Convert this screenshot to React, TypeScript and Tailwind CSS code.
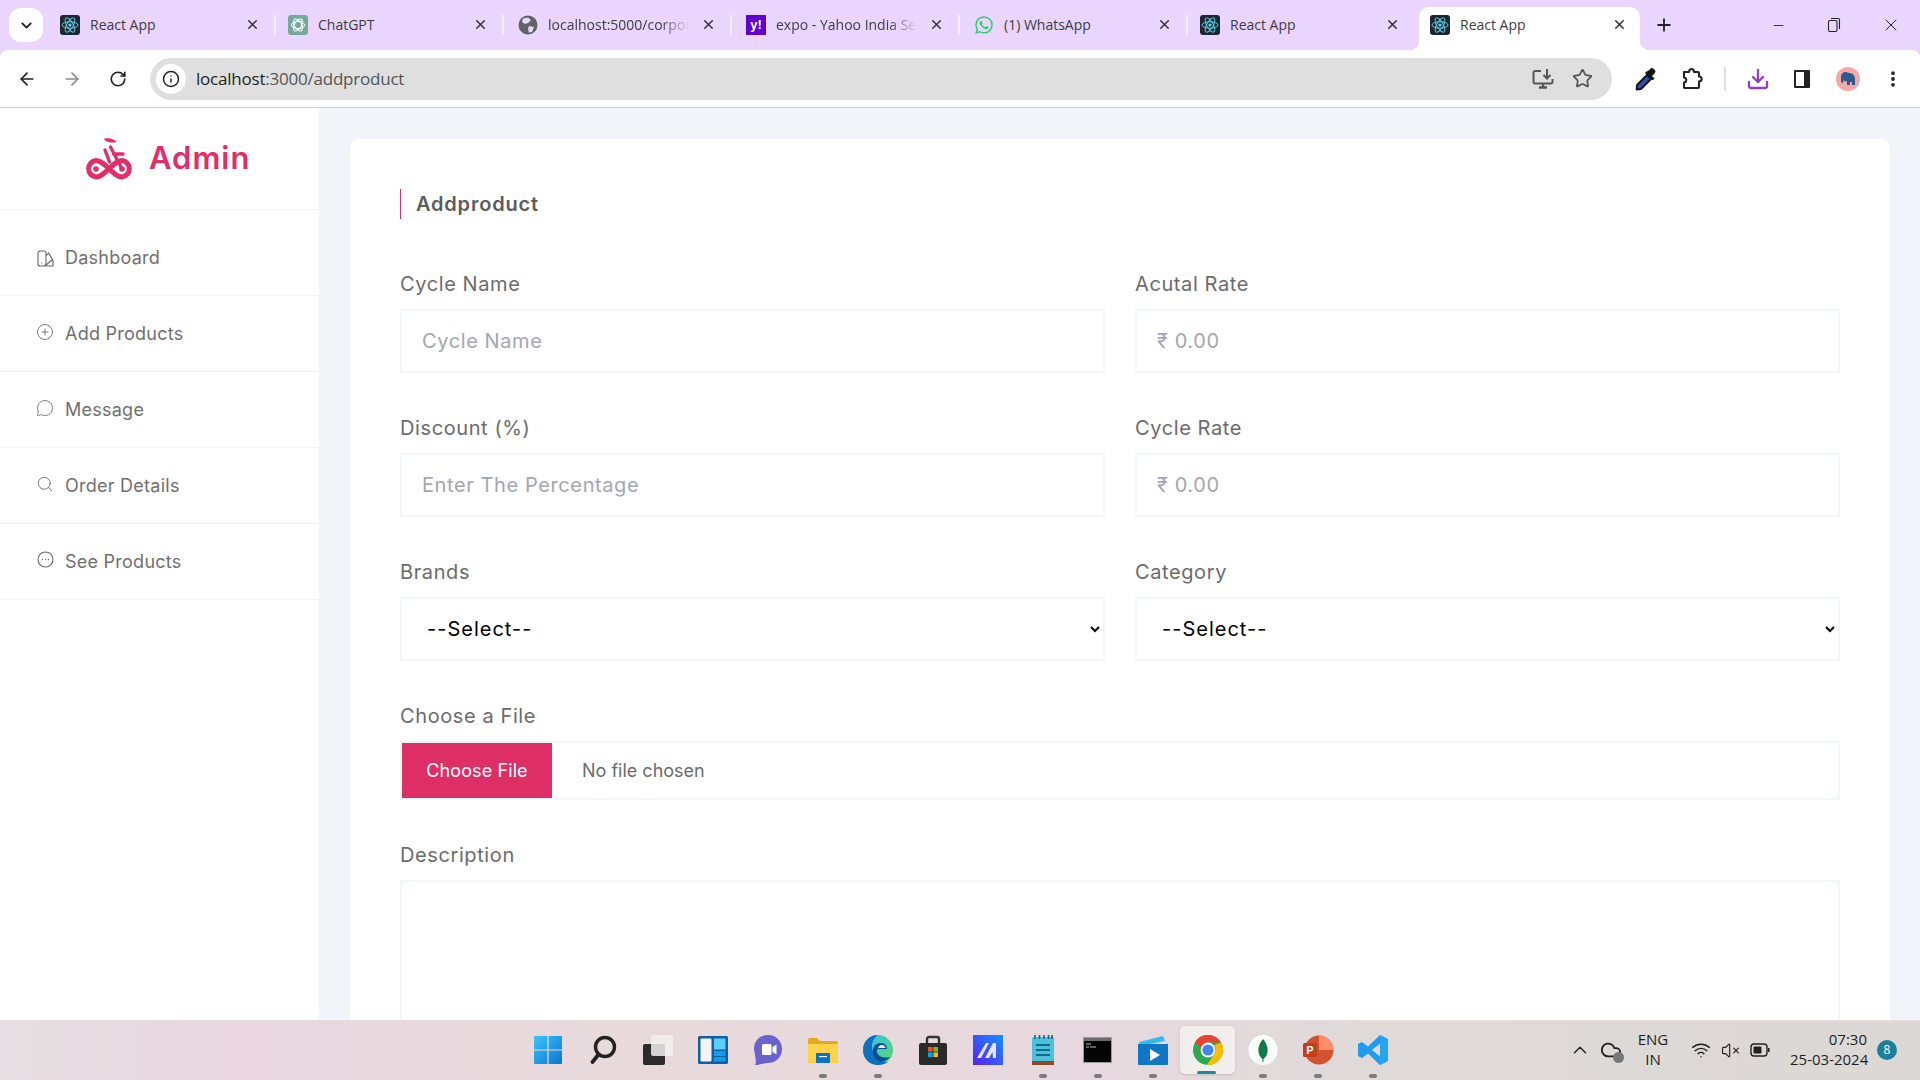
import React from "react";
import { ArrowLeft, ArrowRight, RotateCw, Info, Star, Plus, X, Minus, ChevronDown, ChevronUp, EllipsisVertical, Download, CirclePlus, MessageCircle, Search, Wifi, VolumeX, Cloud } from "lucide-react";
import { IoLogoWhatsapp } from "react-icons/io5";

const ReactIcon = () => (
  <svg width="20" height="20" viewBox="0 0 20 20" className="shrink-0">
    <rect width="20" height="20" rx="3" fill="#20262e" />
    <g fill="none" stroke="#61dafb" strokeWidth="0.9">
      <ellipse cx="10" cy="10" rx="8" ry="3.2" />
      <ellipse cx="10" cy="10" rx="8" ry="3.2" transform="rotate(60 10 10)" />
      <ellipse cx="10" cy="10" rx="8" ry="3.2" transform="rotate(120 10 10)" />
    </g>
    <circle cx="10" cy="10" r="1.6" fill="#61dafb" />
  </svg>
);
const GptIcon = () => (
  <svg width="20" height="20" viewBox="0 0 20 20" className="shrink-0">
    <rect width="20" height="20" rx="3" fill="#74aa9c" />
    <g fill="none" stroke="#fff" strokeWidth="1">
      <ellipse cx="10" cy="10" rx="6.6" ry="3.6" />
      <ellipse cx="10" cy="10" rx="6.6" ry="3.6" transform="rotate(60 10 10)" />
      <ellipse cx="10" cy="10" rx="6.6" ry="3.6" transform="rotate(120 10 10)" />
    </g>
  </svg>
);
const GlobeIcon = () => (
  <svg width="20" height="20" viewBox="0 0 20 20" className="shrink-0 ml-[2px]">
    <circle cx="10" cy="10" r="9.5" fill="#5f6368" />
    <path d="M5 3.5 L10 2.5 L13 5 L10 8 L7 9 L4 7 Z M11 11 L16 12 L14 17 L11 17.5 L10 14 Z" fill="#e9d5fe" />
  </svg>
);
const YahooIcon = () => (
  <span className="shrink-0 w-5 h-5 ml-[2px] bg-[#6001d2] text-white font-bold text-[13px] leading-5 text-center font-['Liberation_Sans',sans-serif]">y!</span>
);

const tabs = [
  { icon: <ReactIcon />, title: "React App" },
  { icon: <GptIcon />, title: "ChatGPT" },
  { icon: <GlobeIcon />, title: "localhost:5000/corporate", fade: true },
  { icon: <YahooIcon />, title: "expo - Yahoo India Search", fade: true },
  { icon: <IoLogoWhatsapp size={20} color="#25d366" className="shrink-0 ml-[2px]" />, title: "(1) WhatsApp" },
  { icon: <ReactIcon />, title: "React App" },
  { icon: <ReactIcon />, title: "React App", active: true },
];

function Tab({ icon, title, fade, active, last }: { icon: React.ReactNode; title: string; fade?: boolean; active?: boolean; last?: boolean }) {
  return (
    <div className={`relative h-[43px] flex items-center pb-[8px] ${active ? "bg-white rounded-t-[10px] w-[221px] ml-[3px] pl-[11px] pr-[13px]" : "w-[228px] pl-[12px] pr-[16px]"}`}>
      {active && (
        <>
          <span className="absolute -left-[10px] bottom-0 w-[10px] h-[10px] bg-[radial-gradient(circle_at_0_0,#e9d5fe_10px,#ffffff_10.5px)]" />
          <span className="absolute -right-[10px] bottom-0 w-[10px] h-[10px] bg-[radial-gradient(circle_at_100%_0,#e9d5fe_10px,#ffffff_10.5px)]" />
        </>
      )}
      {icon}
      <span className={`ml-[10px] flex-1 min-w-0 whitespace-nowrap overflow-hidden text-[14px] text-[#3d3d3d] ${fade ? "mr-[6px] [mask-image:linear-gradient(to_right,black_80%,transparent)]" : ""}`}>{title}</span>
      <X size={15} strokeWidth={2.4} className="ml-[6px] shrink-0 text-[#333]" />
      {!active && !last && <span className="absolute right-0 top-[8px] w-[2px] h-[20px] bg-[#f6effe]" />}
    </div>
  );
}

function TabStrip() {
  return (
    <div className="h-[50px] flex items-end shrink-0 relative">
      <div className="w-[48px] h-[50px] flex items-start pl-[9px] pt-[8px]">
        <div className="w-[34px] h-[34px] rounded-[12px] bg-white flex items-center justify-center">
          <ChevronDown size={17} strokeWidth={2.6} className="text-[#222]" />
        </div>
      </div>
      {tabs.map((t, i) => (
        <Tab key={i} icon={t.icon} title={t.title} fade={t.fade} active={t.active} last={i === 5} />
      ))}
      <div className="w-[48px] h-[43px] flex items-center justify-center pb-[7px]">
        <Plus size={20} strokeWidth={2.2} className="text-[#222]" />
      </div>
      <div className="ml-auto h-[50px] flex items-center text-[#222]">
        <div className="w-[56px] flex justify-center"><Minus size={15} strokeWidth={1.4} /></div>
        <div className="w-[56px] flex justify-center">
          <svg width="14" height="16" viewBox="0 0 14 16" fill="none" stroke="currentColor" strokeWidth="1.1"><rect x="1.5" y="3.5" width="8.5" height="11" rx="1.5" /><path d="M4 1.5 H11 a1.5 1.5 0 0 1 1.5 1.5 V12" /></svg>
        </div>
        <div className="w-[58px] flex justify-center"><X size={20} strokeWidth={1.2} /></div>
      </div>
    </div>
  );
}

function Toolbar() {
  return (
    <div className="h-[58px] shrink-0 bg-white rounded-t-[8px] border-b border-[#cfcfcf] flex items-center relative">
      <div className="w-[150px] flex items-center shrink-0 text-[#222]">
        <div className="w-[54px] flex justify-center"><ArrowLeft size={20} strokeWidth={2} /></div>
        <div className="w-[36px] flex justify-center"><ArrowRight size={20} strokeWidth={2} className="text-[#8a8a8a]" /></div>
        <div className="w-[56px] flex justify-center"><RotateCw size={18} strokeWidth={2.2} /></div>
      </div>
      <div className="w-[1462px] h-[42px] rounded-full bg-[#dfdfdf] flex items-center pl-[6px] shrink-0">
        <div className="w-[30px] h-[30px] rounded-full bg-white flex items-center justify-center shrink-0">
          <Info size={18} strokeWidth={2} className="text-[#222]" />
        </div>
        <span className="ml-[10px] text-[17px] tracking-[-0.22px] text-[#555]"><span className="text-[#1f1f1f]">localhost</span>:3000/addproduct</span>
        <div className="ml-auto flex items-center text-[#555] pr-[19px] gap-[18px]">
          <svg width="22" height="22" viewBox="0 0 22 22" fill="none" stroke="#555" strokeWidth="2"><path d="M9 3 H3 a1.5 1.5 0 0 0 -1.5 1.5 V14 a1.5 1.5 0 0 0 1.5 1.5 H19 a1.5 1.5 0 0 0 1.5 -1.5 V11" /><path d="M15 1 V10 M11.5 7 L15 10.5 L18.5 7" /><path d="M7 19.5 H15 M11 16 V19.5" strokeWidth="2.4" /></svg>
          <Star size={21} strokeWidth={2} />
        </div>
      </div>
      <div className="flex items-center flex-1 text-[#222]">
        <div className="w-[58px] flex justify-center pl-[8px]">
          <svg width="22" height="24" viewBox="0 0 22 24"><path d="M13 8 L17 12 L7 22 L2.5 22.5 L3 18 Z" fill="#2b4fb8" stroke="#111" strokeWidth="1.8" strokeLinejoin="round" /><path d="M11.5 6 L18.5 13 L20 11.5 L17.5 9 L20 6.5 A2.8 2.8 0 0 0 16 2.5 L13.5 5 L13 4.5 Z" fill="#111" stroke="#111" /></svg>
        </div>
        <div className="w-[44px] flex justify-center">
          <svg width="22" height="24" viewBox="0 0 22 24" fill="none" stroke="#222" strokeWidth="2.1" strokeLinejoin="round"><path d="M3 5 H8 C8 1 13 1 13 5 H17 a1 1 0 0 1 1 1 V9.5 C21.5 9.5 21.5 14.5 18 14.5 V20 a1 1 0 0 1 -1 1 H4 a1 1 0 0 1 -1 -1 V15.5 C6 15.5 6 10.5 3 10.5 Z" /></svg>
        </div>
        <div className="w-[2px] h-[24px] bg-[#e6d8f8] ml-[10px]" />
        <div className="w-[44px] flex justify-center ml-[10px]"><Download size={24} strokeWidth={2.3} className="text-[#8a3fd1]" /></div>
        <div className="w-[44px] flex justify-center">
          <svg width="18" height="20" viewBox="0 0 18 20"><path fillRule="evenodd" d="M2 1 H16 a1 1 0 0 1 1 1 V18 a1 1 0 0 1 -1 1 H2 a1 1 0 0 1 -1 -1 V2 a1 1 0 0 1 1 -1 Z M3 3 V17 H11 V3 Z" fill="#222" /></svg>
        </div>
        <div className="w-[24px] h-[24px] rounded-full bg-[#f5a8a8] flex items-center justify-center ml-[12px]">
          <svg width="16" height="16" viewBox="0 0 16 16"><path d="M1 6 C1 3 3 1 6 1 C7 1 8 2 9 2 C12 2 15 4 15 8 V14 H12 V11 H10 V14 H7 V10 C5 11 4 10 4 8 L3 12 L1 11 Z" fill="#2b5b8c" /></svg>
        </div>
        <div className="ml-[23px]"><EllipsisVertical size={20} strokeWidth={2.6} /></div>
      </div>
    </div>
  );
}

const BikeLogo = () => (
  <svg width="48" height="43" viewBox="0 0 48 43" fill="none" stroke="#e12d68" className="shrink-0">
    <path d="M11 23.5 C20 23.5 28 40 37 40 A8.3 8.3 0 0 0 37 23.5 C28 23.5 20 40 11 40 A8.3 8.3 0 0 1 11 23.5 Z" strokeWidth="5" />
    <circle cx="11" cy="32" r="2.8" fill="#e12d68" stroke="none" />
    <circle cx="37" cy="32" r="2.8" fill="#e12d68" stroke="none" />
    <path d="M20 13 L24.5 25 M25.5 10 L37 32 M28.5 17 H38" strokeWidth="3.4" strokeLinecap="round" />
    <path d="M19 1.5 C23 0.5 30 2 31.5 5 C27 6.5 20 5 19 1.5 Z" fill="#e12d68" stroke="none" />
  </svg>
);

const navCls = "mb-[4px] text-[#666]";
const navItems = [
  {
    label: "Dashboard",
    icon: (
      <svg width="17" height="17" viewBox="0 0 17 17" fill="none" stroke="#666" strokeWidth="1.1" className="mb-[-2px]">
        <path d="M3 1 H7 a2 2 0 0 1 2 2 V13.5 a2.5 2.5 0 0 1 -2.5 2.5 H3 a2 2 0 0 1 -2 -2 V3 a2 2 0 0 1 2 -2 Z" />
        <path d="M9 6 L11.5 3 L15.5 9.5 L8 16 M9 16 H16 V10.5 H14.5" />
        <circle cx="4.5" cy="13" r="0.6" fill="#666" stroke="none" />
      </svg>
    ),
  },
  { label: "Add Products", icon: <CirclePlus size={18} strokeWidth={1.15} className={navCls} /> },
  { label: "Message", icon: <MessageCircle size={18} strokeWidth={1.15} className={navCls} /> },
  { label: "Order Details", icon: <Search size={18} strokeWidth={1.15} className={navCls} /> },
  {
    label: "See Products",
    icon: (
      <svg width="17" height="17" viewBox="0 0 17 17" fill="none" stroke="#666" strokeWidth="1.1" className="mb-[4px]">
        <circle cx="8.5" cy="8.5" r="7.5" />
        <circle cx="5.5" cy="8.5" r="0.7" fill="#666" stroke="none" />
        <circle cx="8.5" cy="8.5" r="0.7" fill="#666" stroke="none" />
        <circle cx="11.5" cy="8.5" r="0.7" fill="#666" stroke="none" />
      </svg>
    ),
  },
];

function Sidebar() {
  return (
    <aside className="w-[320px] shrink-0 bg-white border-r border-[#f1f5f9]">
      <div className="h-[102px] border-b border-[#f1f4f7] flex items-center pl-[85px] pb-[1px]">
        <BikeLogo />
        <span className="ml-[16px] text-[31px] font-semibold tracking-[1px] text-[#e12d68]">Admin</span>
      </div>
      {navItems.map((n, i) => (
        <div key={n.label} className={`border-b border-[#f1f4f7] flex items-center pl-[36px] text-[#6f6f6f] ${i === 0 ? "h-[86px] pt-[9px]" : "h-[76px]"}`}>
          <span className="w-[18px] flex justify-center">{n.icon}</span>
          <span className="ml-[11px] text-[18px] tracking-[0.25px]">{n.label}</span>
        </div>
      ))}
    </aside>
  );
}

const inputCls = "w-full h-[64px] border-2 border-[#f2f5f9] bg-white px-[20px] text-[20px] tracking-[0.6px] outline-none placeholder:text-[#a4a6b0]";
const labelCls = "block h-[30px] leading-[30px] mb-[10px] text-[20px] tracking-[0.6px] text-[#6b6b6b]";

function Field({ label, placeholder }: { label: string; placeholder: string }) {
  return (
    <div>
      <label className={labelCls}>{label}</label>
      <input type="text" placeholder={placeholder} className={inputCls} />
    </div>
  );
}
function SelectField({ label }: { label: string }) {
  return (
    <div>
      <label className={labelCls}>{label}</label>
      <select className="w-full h-[64px] border-2 border-[#f2f5f9] bg-white pl-[21px] pr-[12px] text-[20px] tracking-[1px] text-black outline-none">
        <option>--Select--</option>
      </select>
    </div>
  );
}

function Form() {
  return (
    <main className="flex-1 min-w-0 bg-[#f1f5fa] pl-[30px] pr-[30px] pt-[31px] overflow-hidden">
      <div className="bg-white rounded-t-[10px] pt-[50px] pl-[50px] pr-[50px] h-[1000px]">
        <h2 className="h-[30px] border-l border-[#e12d68] pl-[15px] mb-[50px] text-[20px] leading-[30px] font-semibold tracking-[0.8px] text-[#5c5c5c]">Addproduct</h2>
        <div className="grid grid-cols-2 gap-x-[30px] gap-y-[40px]">
          <Field label="Cycle Name" placeholder="Cycle Name" />
          <Field label="Acutal Rate" placeholder="₹ 0.00" />
          <Field label="Discount (%)" placeholder="Enter The Percentage" />
          <Field label="Cycle Rate" placeholder="₹ 0.00" />
          <SelectField label="Brands" />
          <SelectField label="Category" />
          <div className="col-span-2">
            <label className={labelCls}>Choose a File</label>
            <input type="file" className="block w-full h-[59px] border-2 border-[#f2f5f9] text-[18px] tracking-[0px] leading-[55px] text-[#6b6b6b] file:h-[55px] file:w-[150px] file:mr-[30px] file:border-0 file:bg-[#dd2e66] file:text-white file:text-[18px] file:tracking-[0.1px]" />
          </div>
          <div className="col-span-2">
            <label className={labelCls}>Description</label>
            <textarea className="block w-full h-[300px] border-2 border-[#f2f5f9] outline-none resize-none" />
          </div>
        </div>
      </div>
    </main>
  );
}

const W = ({ children }: { children: React.ReactNode }) => <svg width="32" height="32" viewBox="0 0 32 32">{children}</svg>;

const taskIcons: { el: React.ReactNode; dot?: boolean; active?: boolean }[] = [
  { el: <W><defs><linearGradient id="w1" x1="0" y1="0" x2="1" y2="1"><stop offset="0" stopColor="#3cc4fa" /><stop offset="1" stopColor="#0a74d0" /></linearGradient></defs><path d="M2 3 a1 1 0 0 1 1-1 H15.4 V15.4 H2 Z M16.6 2 H29 a1 1 0 0 1 1 1 V15.4 H16.6 Z M2 16.6 H15.4 V30 H3 a1 1 0 0 1 -1-1 Z M16.6 16.6 H30 V29 a1 1 0 0 1 -1 1 H16.6 Z" fill="url(#w1)" /></W> },
  { el: <W><circle cx="18" cy="13" r="9.5" fill="none" stroke="#222" strokeWidth="3.4" /><path d="M11.5 20.5 L5.5 28" stroke="#222" strokeWidth="3.8" strokeLinecap="round" /></W> },
  { el: <W><rect x="1" y="10" width="22" height="21" rx="2" fill="#2b2b2b" /><rect x="9" y="1" width="22" height="21" rx="2" fill="#f3eeee" fillOpacity="0.85" /></W> },
  { el: <W><rect x="1" y="2" width="30" height="28" rx="1.5" fill="#0f5ea8" /><rect x="3.5" y="4.5" width="11" height="23" rx="1" fill="#f4f4f4" /><rect x="17" y="4.5" width="11.5" height="11" fill="#5cd0fb" /><rect x="17" y="17" width="11.5" height="5" fill="#169be8" /><rect x="17" y="23" width="11.5" height="4.5" fill="#169be8" /></W> },
  { el: <W><path d="M16 1 C24 1 30 7 30 15 C30 23 24 29 16 29 C12 29 7 31 3 31 C5 28 3 22 2 15 C2 7 8 1 16 1 Z" fill="#6a63cf" /><rect x="10" y="10" width="9.5" height="11" rx="1.5" fill="#fff" /><path d="M20.5 13 L24.5 10.5 V20.5 L20.5 18 Z" fill="#fff" /></W> },
  { dot: true, el: <W><path d="M1 6 a2 2 0 0 1 2-2 H10 L13 7 H29 a2 2 0 0 1 2 2 V27 a2 2 0 0 1 -2 2 H3 a2 2 0 0 1 -2-2 Z" fill="#e5a81d" /><path d="M1 10 H31 V27 a2 2 0 0 1 -2 2 H3 a2 2 0 0 1 -2-2 Z" fill="#fdd34c" /><path d="M9 20 a1 1 0 0 1 1-1 H22 a1 1 0 0 1 1 1 V29 H9 Z" fill="#0a74c4" /><rect x="12" y="22" width="8" height="1.2" fill="#e8f4ff" /></W> },
  { dot: true, el: <W><defs><linearGradient id="e1" x1="0" y1="0" x2="1" y2="1"><stop offset="0" stopColor="#37c3e8" /><stop offset="1" stopColor="#5bd66b" /></linearGradient></defs><circle cx="16" cy="16" r="15" fill="url(#e1)" /><path d="M1 16 C1 7 8 1 16 1 C13 3 10 7 10 12 C10 20 16 29 26 28 C23 30 20 31 16 31 C8 31 1 25 1 16 Z" fill="#0f6fc0" /><path d="M11 17 C11 11 15 9 19 9 C23 9 25 12 25 15 H17 C15 15 14 17 15.5 19.5 C17.5 23 22 24.5 28 23 C25 27 21 28.5 17.5 27.5 C13.5 26 11 22 11 17 Z" fill="#0b4f96" /><path d="M16 15 C16 12 18 11 20 11 C22 11 23.5 12.5 23.5 14 H18 C16.8 14 16 14.5 16 15 Z" fill="#e9eef2" /></W> },
  { el: <W><path d="M10 9 V5 a2 2 0 0 1 2-2 H20 a2 2 0 0 1 2 2 V9" fill="none" stroke="#333" strokeWidth="2.4" /><rect x="2" y="9" width="28" height="22" rx="2" fill="#2a2a2a" /><rect x="11" y="13" width="4.6" height="4.6" fill="#f25022" /><rect x="16.4" y="13" width="4.6" height="4.6" fill="#7fba00" /><rect x="11" y="18.4" width="4.6" height="4.6" fill="#00a4ef" /><rect x="16.4" y="18.4" width="4.6" height="4.6" fill="#ffb900" /></W> },
  { el: <W><defs><linearGradient id="m1" x1="0" y1="1" x2="1" y2="0"><stop offset="0" stopColor="#5a22f0" /><stop offset="1" stopColor="#1390ff" /></linearGradient></defs><rect x="1" y="1" width="30" height="30" fill="url(#m1)" /><path d="M5 24 L14 9 H17 L9 24 Z M13 24 L21 9 H24 L24 24 H21 L20.5 18 L17 24 Z" fill="#e9e4ff" /></W> },
  { dot: true, el: <W><rect x="5" y="3" width="22" height="26" rx="1.5" fill="#4cc0dc" /><rect x="5" y="27" width="22" height="4" fill="#8a4a2a" /><path d="M8 1 v4 M12.5 1 v4 M17 1 v4 M21.5 1 v4 M25 1 v4" stroke="#116a86" strokeWidth="1.6" /><path d="M9 11 H23 M9 16 H23 M9 21 H23" stroke="#0f6c8c" strokeWidth="2" /></W> },
  { dot: true, el: <W><rect x="1" y="3" width="29" height="26" fill="#9a9a9a" /><rect x="2" y="4" width="27" height="24" fill="#050505" /><rect x="2" y="4" width="27" height="3" fill="#6c6c6c" /><path d="M4 10 H9 M4 13 H7 M8 13 H14" stroke="#bbb" strokeWidth="1" /></W> },
  { dot: true, el: <W><path d="M2 8 L26 2 L28 7 L3 12 Z" fill="#39b8ee" /><path d="M1 10 H31 V30 a1 1 0 0 1 -1 1 H2 a1 1 0 0 1 -1 -1 Z" fill="#0f76c5" /><path d="M13 15 L23 21 L13 27 Z" fill="#fff" /></W> },
  { active: true, el: <W><circle cx="16" cy="16" r="15" fill="#2da94f" /><path d="M16 1 A15 15 0 0 1 29 8.5 H16 A7.5 7.5 0 0 0 8.8 13.8 L3 8 A15 15 0 0 1 16 1 Z" fill="#e94335" /><path d="M29 8.5 A15 15 0 0 1 15 31 L22.3 19.7 A7.5 7.5 0 0 0 22 11 Z" fill="#fbbc04" /><circle cx="16" cy="16" r="7.4" fill="#fff" /><circle cx="16" cy="16" r="5.6" fill="#4285f4" /></W> },
  { dot: true, el: <W><ellipse cx="16" cy="16" rx="14.5" ry="15" fill="#fbfbfb" /><path d="M16 5 C20 10 21 14 20.5 18 C20 22 17.5 24 16.5 25 L16.5 28 H15.5 L15.5 25 C14.5 24 12 22 11.5 18 C11 14 12 10 16 5 Z" fill="#0d7a4b" /></W> },
  { dot: true, el: <W><circle cx="17" cy="16" r="14.5" fill="#d35230" /><path d="M17 1.5 A14.5 14.5 0 0 1 31.5 16 H17 Z" fill="#ff8f6b" /><rect x="1" y="9" width="14" height="14" rx="1.5" fill="#c43e1c" /><text x="8" y="20" textAnchor="middle" fontSize="11" fontWeight="700" fill="#fff" fontFamily="Liberation Sans, sans-serif">P</text></W> },
  { dot: true, el: <W><path fillRule="evenodd" d="M23 1 L31 5 V27 L23 31 L11 19.5 L5 24 L1 22 V10 L5 8 L11 12.5 Z M23 9.5 L15 16 L23 22.5 Z" fill="#1f9cf0" /><path d="M23 1 L31 5 V27 L23 31 Z" fill="#2aa8f2" fillOpacity="0.7" /></W> },
];

function Taskbar() {
  return (
    <div className="h-[60px] shrink-0 border-t border-[#e8e0e0] pb-[1px] bg-[linear-gradient(90deg,#e6dfe2_0%,#e9d6df_12%,#e8dadb_35%,#e7d8df_55%,#dfdad8_72%,#dcd8d5_100%)] flex items-center relative">
      <div className="flex items-center pl-[520px]">
        {taskIcons.map((t, i) => (
          <div key={i} className={`relative w-[55px] h-[48px] flex items-center justify-center ${t.active ? "bg-[#f2eeec] rounded-[5px] shadow-sm" : ""}`}>
            {t.el}
            {t.dot && <span className="absolute bottom-[-4px] left-[24px] w-[8px] h-[4px] rounded-full bg-[#7d7a7a]" />}
            {t.active && <span className="absolute bottom-[0px] left-[17px] w-[19px] h-[3px] rounded-full bg-[#1f8a9e]" />}
          </div>
        ))}
      </div>
      <div className="flex items-center text-[#1f1f1f] ml-[169px] font-['Open_Sans',sans-serif]">
        <ChevronUp size={22} strokeWidth={1.5} />
        <div className="relative ml-[9px]">
          <Cloud size={22} strokeWidth={2} />
          <span className="absolute -right-[2px] -bottom-[2px] w-[11px] h-[11px] rounded-full bg-[#777] text-white" />
        </div>
        <div className="ml-[15px] w-[32px] text-center text-[15px] leading-[20px] mb-[3px]">ENG<br />IN</div>
        <Wifi size={20} strokeWidth={1.7} className="ml-[22px]" />
        <VolumeX size={19} strokeWidth={1.4} className="ml-[10px]" />
        <svg width="20" height="14" viewBox="0 0 20 14" className="ml-[10px]"><rect x="1" y="1" width="16" height="12" rx="3" fill="none" stroke="#222" strokeWidth="1.4" /><rect x="3.5" y="3.5" width="8" height="7" rx="1" fill="#222" /><rect x="18" y="5" width="1.6" height="4" fill="#222" /></svg>
        <div className="ml-[20px] w-[77px] text-right text-[15px] leading-[20px] whitespace-nowrap mb-[3px]">07:30<br />25-03-2024</div>
        <div className="ml-[10px] w-[20px] h-[20px] rounded-full bg-[#1f7f9a] text-white text-[12px] leading-[20px] text-center">8</div>
      </div>
    </div>
  );
}

export default function App() {
  return (
    <div className="w-[1920px] h-[1080px] overflow-hidden flex flex-col bg-[#e9d5fe] font-['Open_Sans',sans-serif]">
      <TabStrip />
      <Toolbar />
      <div className="flex-1 min-h-0 flex overflow-hidden font-['Inter',sans-serif]">
        <Sidebar />
        <Form />
      </div>
      <Taskbar />
    </div>
  );
}
